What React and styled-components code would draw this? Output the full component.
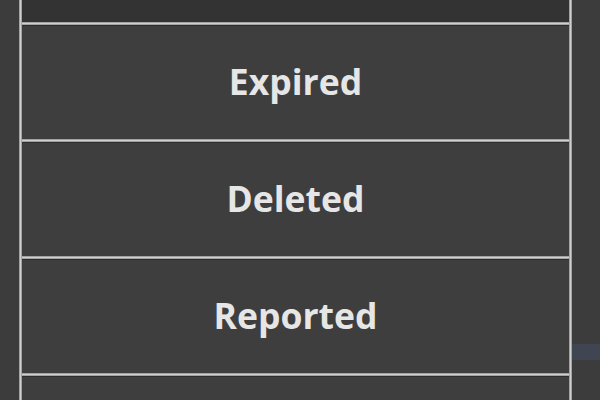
import React from "react";
import styled, { createGlobalStyle } from "styled-components";

const Global = createGlobalStyle`
  html, body { margin: 0; padding: 0; background: #3c3c3c; overflow: hidden; }
  #root { width: 600px; height: 400px; }
`;

const Page = styled.div`
  display: flex;
  width: 600px;
  height: 400px;
  background: #3c3c3c;
  overflow: hidden;
`;

const Gutter = styled.div`
  width: 19px;
  flex: none;
`;

const Rail = styled.div`
  width: 3px;
  flex: none;
  background: linear-gradient(to right, #8c8c8c, #cfcfcf 50%, #8c8c8c);
`;

const Panel = styled.div`
  width: 547px;
  flex: none;
  display: flex;
  flex-direction: column;
`;

const Row = styled.div`
  flex: none;
  height: ${(p) => p.$h}px;
  background: ${(p) => (p.$dark ? "#333333" : "#3e3e3e")};
  display: flex;
  align-items: center;
  justify-content: center;
  font-family: "Open Sans", "Noto Sans", sans-serif;
  font-weight: 700;
  font-size: 35.5px;
  color: #e6e6e6;
  padding-bottom: 2px;
  box-sizing: border-box;
`;

const Divider = styled.div`
  flex: none;
  height: 3px;
  background: linear-gradient(to bottom, #8c8c8c, #cfcfcf 50%, #8c8c8c);
  box-shadow: 0 1px 0 #2c2c2c;
  position: relative;
  z-index: 1;
`;

const Side = styled.div`
  flex: 1;
  padding-top: 344px;
`;

const Chip = styled.div`
  height: 16px;
  background: #3f4651;
`;

const rows = ["Expired", "Deleted", "Reported"];

export default function App() {
  return (
    <>
      <Global />
      <Page>
        <Gutter />
        <Rail />
        <Panel>
          <Row $h={22} $dark />
          {rows.map((r) => (
            <React.Fragment key={r}>
              <Divider />
              <Row $h={114}>{r}</Row>
            </React.Fragment>
          ))}
          <Divider />
          <Row $h={40} />
        </Panel>
        <Rail />
        <Side>
          <Chip />
        </Side>
      </Page>
    </>
  );
}
